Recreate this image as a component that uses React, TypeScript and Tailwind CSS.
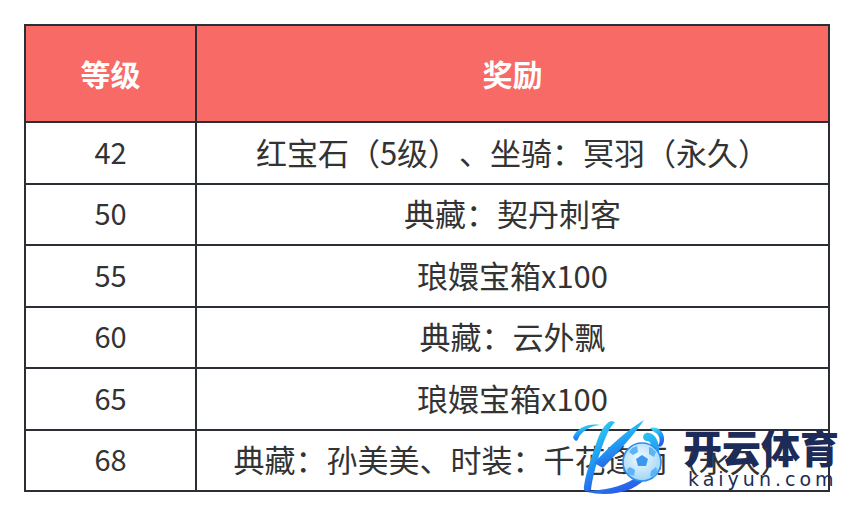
import React from "react";

const rows: { level: string; reward: string }[] = [
  { level: "42", reward: "红宝石（5级）、坐骑：冥羽（永久）" },
  { level: "50", reward: "典藏：契丹刺客" },
  { level: "55", reward: "琅嬛宝箱x100" },
  { level: "60", reward: "典藏：云外飘" },
  { level: "65", reward: "琅嬛宝箱x100" },
  { level: "68", reward: "典藏：孙美美、时装：千花逢雨（永久）" },
];

function KaiyunMark() {
  return (
    <div className="pointer-events-none absolute left-[560px] top-[410px] flex items-start">
      <svg width="120" height="90" viewBox="0 0 120 90">
        <defs>
          <linearGradient id="kg" x1="0" y1="0" x2="0.4" y2="1">
            <stop offset="0" stopColor="#42e3ef" />
            <stop offset="0.55" stopColor="#1fa2f4" />
            <stop offset="1" stopColor="#2a5ce9" />
          </linearGradient>
          <radialGradient id="ball" cx="0.45" cy="0.4" r="0.65">
            <stop offset="0" stopColor="#f2faff" />
            <stop offset="1" stopColor="#9ad3f8" />
          </radialGradient>
        </defs>
        {/* stem */}
        <path
          d="M51 11 C44 14 40 22 36 34 C32 46 26 62 24 76 C23 81 26 83 31 80 C32 70 36 54 41 40 C45 28 49 18 55 12 Z"
          fill="url(#kg)"
        />
        {/* curl top-left */}
        <path d="M13 27 C17 18 28 13 40 15 C31 16 22 20 18 29 C17 32 14 31 13 27 Z" fill="url(#kg)" />
        {/* upper arm */}
        <path d="M34 53 C48 38 64 22 84 10 C76 22 62 38 43 58 Z" fill="url(#kg)" />
        {/* lower swirl */}
        <path
          d="M27 82 C40 85 56 85 71 79 C86 72 97 58 99 42 C100 30 93 21 86 23 C81 25 83 32 88 31 C93 33 93 43 89 53 C83 65 69 74 51 78 C42 80 34 80 27 82 Z"
          fill="url(#kg)"
        />
        <path
          d="M90 18 C98 16 105 22 104 31 C103 36 100 38 98 36 C101 32 100 24 94 22 Z"
          fill="url(#kg)"
        />
        {/* football */}
        <circle cx="82" cy="52" r="19" fill="url(#ball)" stroke="#2d8cef" strokeWidth="1.6" />
        <polygon points="82,45 88,49 86,56 78,56 76,49" fill="#3a98f1" />
        <polygon points="72,38 77,36 78,42 73,45 69,42" fill="#5cb3f5" />
        <polygon points="92,38 96,42 94,47 89,44 89,37" fill="#5cb3f5" />
        <polygon points="70,57 75,60 74,66 68,64 67,59" fill="#5cb3f5" />
        <polygon points="91,61 96,57 98,62 94,67 90,66" fill="#5cb3f5" />
      </svg>
      <div className="ml-[3px] mt-[15px] flex flex-col items-start">
        <span className="text-[39px] font-black leading-[42px] text-[#1c2b57] [font-family:'Noto_Sans_CJK_SC',sans-serif]">
          开云体育
        </span>
        <span className="ml-[5px] mt-[2px] text-[19px] leading-[20px] tracking-[4px] text-[#1c2b57] [font-family:'DejaVu_Sans',sans-serif]">
          kaiyun.com
        </span>
      </div>
    </div>
  );
}

export default function App() {
  return (
    <div className="relative h-[515px] w-[854px] bg-white [font-family:'Noto_Sans_CJK_SC',sans-serif] [text-spacing-trim:space-all]">
      <div className="pl-[24px] pt-[24px]">
        <table className="w-[806px] border-collapse border-2 border-[#2b2e35] text-center">
          <thead>
            <tr className="h-[97px] bg-[#f76a66] text-white">
              <th className="w-[171px] border-2 border-[#2b2e35] text-[30px] font-bold">等级</th>
              <th className="border-2 border-[#2b2e35] text-[30px] font-bold">奖励</th>
            </tr>
          </thead>
          <tbody>
            {rows.map((r) => (
              <tr key={r.level} className="h-[61.5px] text-[#333]">
                <td className="border-2 border-[#2b2e35] pb-[3px] text-[29px] leading-none">{r.level}</td>
                <td className="border-2 border-[#2b2e35] pb-[3px] text-[31px] leading-none">{r.reward}</td>
              </tr>
            ))}
          </tbody>
        </table>
      </div>
      <KaiyunMark />
    </div>
  );
}
